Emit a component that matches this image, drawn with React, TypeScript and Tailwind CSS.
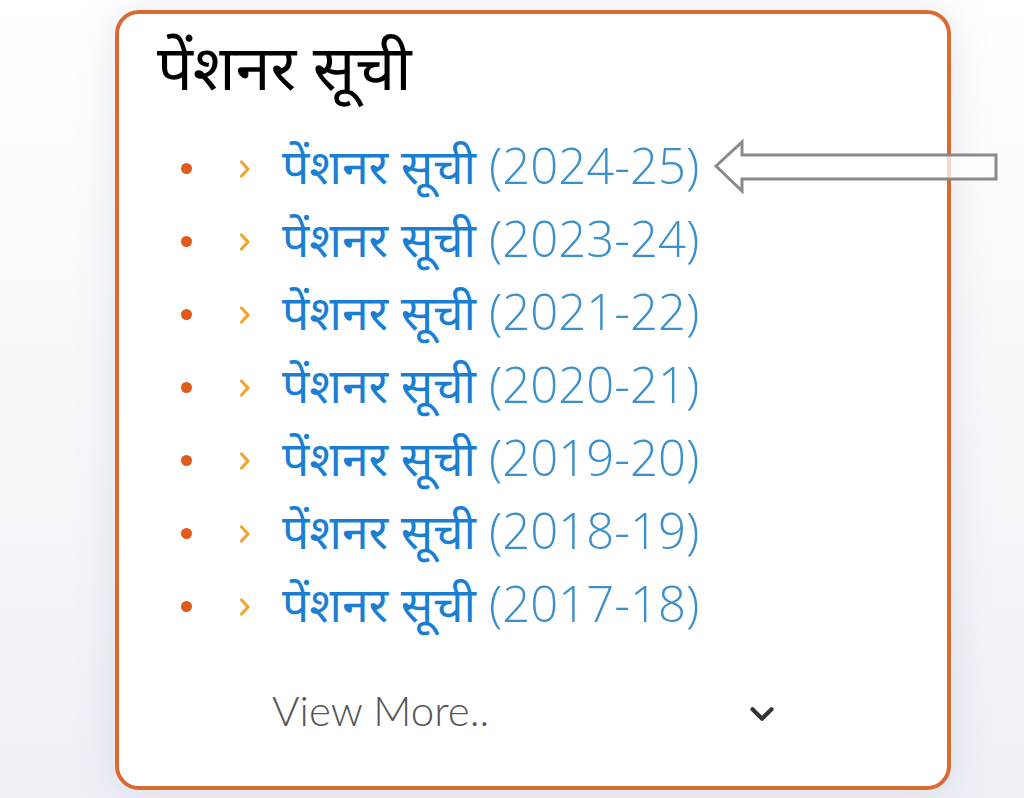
import { ChevronDown } from "lucide-react";

const years = ["2024-25", "2023-24", "2021-22", "2020-21", "2019-20", "2018-19", "2017-18"];

const hindi = { fontFamily: '"Noto Sans Devanagari", "Lohit Devanagari", "Noto Sans", "Open Sans", sans-serif' };

export default function App() {
  return (
    <div className="relative h-[798px] w-[1024px] overflow-hidden bg-gradient-to-b from-white to-[#eef0f6]">
      <div className="ml-[115px] mt-[10px] h-[780px] w-[836px] rounded-[24px] border-[4px] border-[#d96a33] bg-white shadow-[0_0_40px_rgba(120,130,160,0.18)]">
        <h2 className="h-[118px] pl-[38px] pt-[25px] text-[63px] font-normal leading-[72px] text-black" style={hindi}>
          पेंशनर सूची
        </h2>
        <ul className="pl-[62px]">
          {years.map((y) => (
            <li key={y} className="flex h-[73px] items-center">
              <span className="size-[11px] rounded-full bg-[#e05a1c]" />
              <svg className="ml-[47px]" width="12" height="20" viewBox="0 0 12 20">
                <path d="M2.5 3 L9 10 L2.5 17" fill="none" stroke="#f0a62e" strokeWidth="3.2" strokeLinecap="round" strokeLinejoin="round" />
              </svg>
              <a className="ml-[31px] flex items-baseline leading-none" href="#">
                <span className="text-[48px] font-normal text-[#1a7fd2]" style={hindi}>पेंशनर सूची</span>
                <span className="ml-[13px] text-[49px] font-light text-[#3b8fcb]" style={{ fontFamily: '"Open Sans", sans-serif' }}>
                  ({y})
                </span>
              </a>
            </li>
          ))}
        </ul>
        <div className="mt-[36px] flex items-center pl-[153px] pr-[166px]">
          <span className="text-[42px] font-light text-[#555]" style={{ fontFamily: 'Lato, "Open Sans", sans-serif' }}>
            View More..
          </span>
          <ChevronDown className="ml-auto mt-[6px] size-[38px] text-[#333]" strokeWidth={2.6} />
        </div>
      </div>
      {/* annotation arrow drawn over the card */}
      <svg className="absolute left-[710px] top-[138px]" width="292" height="58" viewBox="0 0 292 58">
        <path d="M6 28 L32 4 L32 17 L286 17 L286 41 L32 41 L32 53 Z" fill="white" fillOpacity="0.75" stroke="#8a8a8a" strokeWidth="3" strokeLinejoin="miter" />
      </svg>
    </div>
  );
}
